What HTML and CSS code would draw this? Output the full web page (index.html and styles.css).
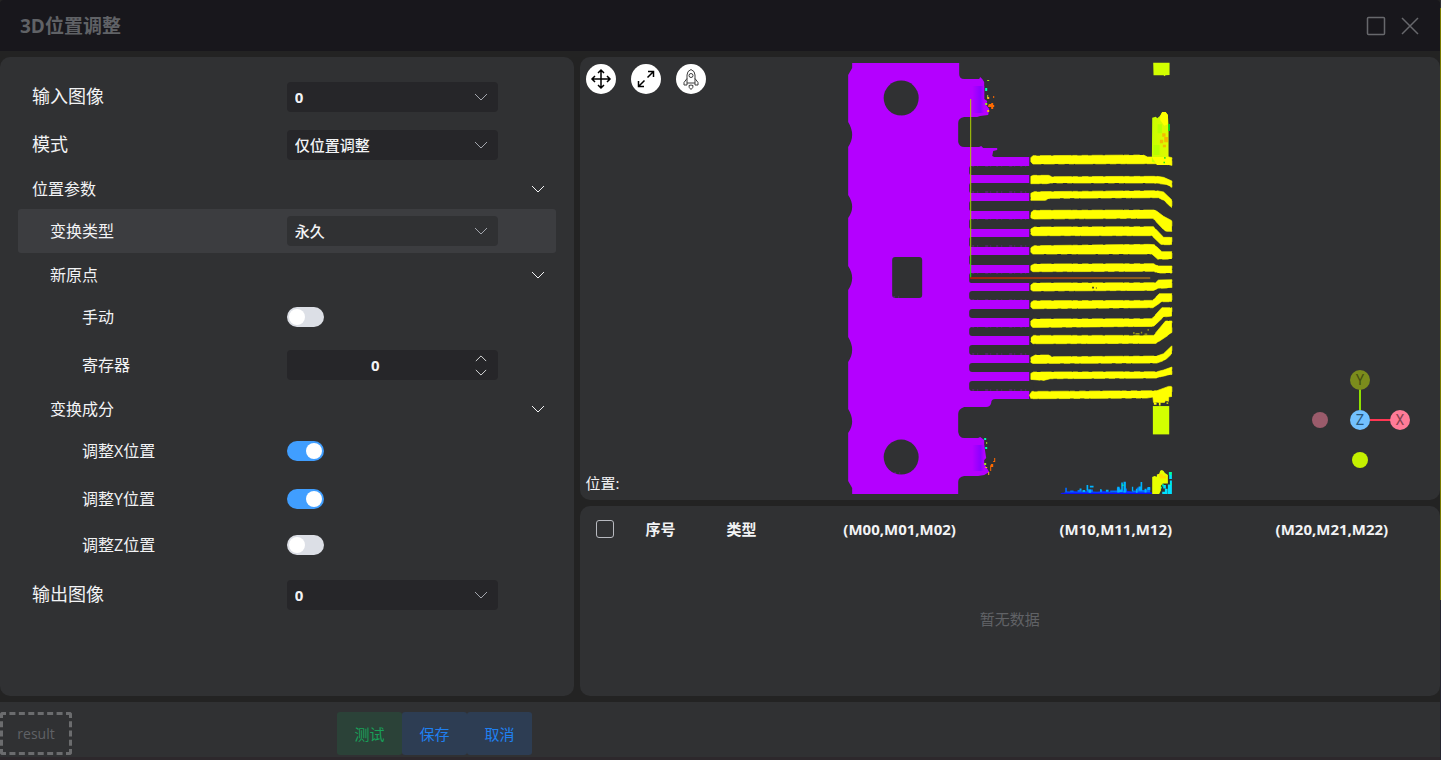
FILE: index.html
```html
<!DOCTYPE html>
<html lang="zh-CN">
<head>
<meta charset="utf-8">
<title>3D位置调整</title>
<link rel="stylesheet" href="styles.css">
</head>
<body>
<svg class="defs" aria-hidden="true">
  <symbol id="down" viewBox="0 0 14 8"><path d="M1 1l6 6 6-6" fill="none" stroke="currentColor"/></symbol>
  <symbol id="up" viewBox="0 0 14 8"><path d="M1 7l6-6 6 6" fill="none" stroke="currentColor"/></symbol>
</svg>
<div class="app">
  <header class="titlebar">
    <h1>3D位置调整</h1>
    <div class="window-actions">
      <button type="button" aria-label="最大化"><svg viewBox="0 0 20 20"><rect x="1.500" y="1.500" width="17" height="17" rx="1"/></svg></button>
      <button type="button" aria-label="关闭"><svg viewBox="0 0 20 20"><path d="M2 2l16 16M18 2L2 18"/></svg></button>
    </div>
  </header>

  <main class="workspace">
    <form class="panel settings">
      <div class="row">
        <label for="input-image" class="large">输入图像</label>
        <div class="field"><select id="input-image"><option>0</option></select><svg><use href="#down"/></svg></div>
      </div>
      <div class="row">
        <label for="mode" class="large">模式</label>
        <div class="field"><select id="mode"><option>仅位置调整</option></select><svg><use href="#down"/></svg></div>
      </div>
      <button type="button" class="section h40">位置参数<svg><use href="#down"/></svg></button>
      <div class="row h44 active">
        <label for="kind" class="level1">变换类型</label>
        <div class="field"><select id="kind"><option>永久</option></select><svg><use href="#down"/></svg></div>
      </div>
      <button type="button" class="section h44 level1">新原点<svg><use href="#down"/></svg></button>
      <div class="row h40">
        <label for="manual" class="level2">手动</label>
        <input type="checkbox" class="switch" id="manual">
      </div>
      <div class="row h56">
        <label for="register" class="level2">寄存器</label>
        <div class="field number">
          <input type="text" inputmode="numeric" id="register" value="0">
          <div class="steps">
            <button type="button" aria-label="增加"><svg><use href="#up"/></svg></button>
            <button type="button" aria-label="减少"><svg><use href="#down"/></svg></button>
          </div>
        </div>
      </div>
      <button type="button" class="section h32 level1">变换成分<svg><use href="#down"/></svg></button>
      <div class="row h52">
        <label for="adjust-x" class="level2">调整X位置</label>
        <input type="checkbox" class="switch" id="adjust-x" checked>
      </div>
      <div class="row h44">
        <label for="adjust-y" class="level2">调整Y位置</label>
        <input type="checkbox" class="switch" id="adjust-y" checked>
      </div>
      <div class="row">
        <label for="adjust-z" class="level2">调整Z位置</label>
        <input type="checkbox" class="switch" id="adjust-z">
      </div>
      <div class="row h52">
        <label for="output-image" class="large">输出图像</label>
        <div class="field"><select id="output-image"><option>0</option></select><svg><use href="#down"/></svg></div>
      </div>
    </form>

    <div class="results">
      <section class="panel viewer">
        <svg class="cloud" viewBox="580 57 860 443" role="img" aria-label="点云">
          <defs>
            <linearGradient id="tip" x1="0" x2="1"><stop offset="0" stop-color="#b400ff"/><stop offset=".7" stop-color="#8c00ff"/><stop offset="1" stop-color="#b400ff"/></linearGradient>
            <linearGradient id="ay" x1="0" y1="0" x2="0" y2="1"><stop offset="0" stop-color="#b4d200"/><stop offset=".85" stop-color="#96d200"/><stop offset="1" stop-color="#00f000"/></linearGradient>
            <linearGradient id="ax"><stop offset="0" stop-color="#a81c0c"/><stop offset="1" stop-color="#8a6420"/></linearGradient>
            <linearGradient id="blk"><stop offset="0" stop-color="#c8ff00"/><stop offset="1" stop-color="#e4f800"/></linearGradient>
          </defs>
          <path fill="#b400ff" d="M852 63H959V74Q959 79 964 79H979L980 77 982 79 984 82V99L987 101 986 105 989 109 988 115 980 116 977 117H964Q958 118 958 123V142Q959 147 964 147H979L981 146 983 148H997V150L993 151 992 156 994 157H1029V399H995Q991 399 991 403 990 407 986 407H964Q958 409 958 414V432Q959 438 964 438H978L980 437 984 440V445L986 458 983 461 986 467 989 472 984 475 978 476H964Q958 477 958 482V494H852V488L848 481V433Q856 422 848 409V362Q856 350 848 337V290Q856 278 848 266V218Q856 207 848 195V147Q856 135 848 122V75L852 68Z"/>
          <path fill="url(#tip)" d="M972 86H984V113H972zM972 445H984V471H972z"/>
          <g fill="#303133">
            <circle cx="901" cy="98" r="17.500"/><circle cx="901" cy="457" r="17.500"/>
            <rect x="892" y="257" width="30" height="41" rx="3"/>
            <rect x="969" y="166" width="64" height="9" rx="2"/>
            <rect x="969" y="183" width="64" height="10" rx="2"/>
            <rect x="969" y="201" width="64" height="10" rx="2"/>
            <rect x="969" y="219" width="64" height="10" rx="2"/>
            <rect x="969" y="237" width="64" height="10" rx="2"/>
            <rect x="969" y="255" width="64" height="10" rx="2"/>
            <rect x="969" y="273" width="64" height="10" rx="2"/>
            <rect x="969" y="291" width="64" height="9" rx="3"/>
            <rect x="969" y="309" width="64" height="9" rx="3"/>
            <rect x="969" y="327" width="64" height="9" rx="3"/>
            <rect x="969" y="345" width="64" height="10" rx="3"/>
            <rect x="969" y="363" width="64" height="9" rx="3"/>
            <rect x="969" y="381" width="64" height="10" rx="3"/>
          </g>
          <path fill="none" stroke="#b400ff" stroke-opacity=".5" stroke-dasharray="2 3 1 7 3 2 1 5" d="M893 297H903M895 116H903M894 473H902M972 166H1027M972 192H1027M972 219H1027M972 246H1027M972 273H1027M972 300H1027M972 327H1027M972 354H1027M972 390H1027"/>
          <g fill="#ff0" stroke="#ff0" stroke-width="2" stroke-dasharray="19 11 33 7 54 3 15 13">
            <g transform="translate(1010 55) scale(.3333)">
              <path d="M62 308L68 302 400 300 412 306 425 306 450 300 485 308V332L460 326 68 327 62 320Z"/>
              <path d="M62 364L70 361H115L125 365 440 364 460 367 485 378V397L465 388 430 384H120L110 386H62Z"/>
              <path d="M62 415L72 410 440 407 460 411 485 435V459L462 437 445 428 120 430 105 436H62Z"/>
              <path d="M62 473L70 466 435 465 460 484 485 497V529H465L428 490 68 492 62 488Z"/>
              <path d="M62 522L72 516 430 515 460 547H485V569H453L425 542H68L62 538Z"/>
              <path d="M62 578L72 572 415 568 433 569 455 590H485V612L443 613 425 597H68L62 592Z"/>
              <path d="M62 632L72 627 430 626 445 633H485V654H443L430 649 68 650 62 646Z"/>
            </g>
            <g transform="translate(1010 275) scale(.3333)">
              <path d="M62 30L70 24 435 23 445 15 485 14V38L443 40 430 46 68 48 62 44Z"/>
              <path d="M62 82L70 77 427 76 447 56H485V80H455L428 98 68 101 62 96Z"/>
              <path d="M62 138L70 132 425 131 455 98H485V123L460 126 430 154 68 157 62 152Z"/>
              <path d="M62 188L70 181H430L466 138H485V172L475 180 437 205 68 206 62 200Z"/>
              <path d="M62 247L75 240H115L125 245 440 243 460 236 485 212V236L465 255 440 264 68 265 62 262Z"/>
              <path d="M62 295L70 291 440 290 460 285 485 276V298L455 304 440 309 120 311 100 316 62 313Z"/>
              <path d="M58 360L65 349 440 347 475 334H485V364L475 366 476 380 466 376 463 382H430L428 366 410 369 61 371Z"/>
            </g>
          </g>
          <g transform="translate(1010 55) scale(.3333)">
            <path fill="#d2ff00" d="M429 23H478V60L466 61 463 64 460 61H430Z"/>
            <path fill="url(#blk)" d="M426 188L437 185 441 190 450 182 456 171H466L473 180 475 215V306L482 330H460L425 320Z"/>
            <path fill="#ffff00" d="M450 182L456 171H466L473 180V208L462 212 450 195ZM425 306H477L484 330H440Z"/>
            <path fill="#b8ff00" d="M442 208H455V235H442ZM430 270H448V300H430Z"/>
            <path fill="#ffa000" fill-opacity=".7" d="M456 235H466V245H456ZM462 246H473V262H462ZM449 254H459V265H449ZM458 269H467V277H458Z"/>
            <path fill="#00e020" d="M474 207H479V228H474ZM462 306H466V311H462ZM460 320H464V325H460Z"/>
          </g>
          <g transform="translate(1010 275) scale(.3333)">
            <path fill="#d2ff00" d="M428 393H477V478H428Z"/>
            <path fill="#ff0" d="M431 382h8v7h-8zM446 382h5v9h-5zM469 382h5v4h-5z"/>
            <path fill="#ff0" fill-opacity=".5" d="M369 171h4v6h-4zM376 174h12v4h-12zM392 170h4v5h-4zM412 162h4v5h-4zM403 175h8v4h-8z"/>
            <path fill="#303133" d="M246 35h5v5h-5zM257 37h3v3h-3z"/>
            <path fill="#1010ff" d="M150 657L155 653H165L168 649 178 651 190 648 210 651 235 648 260 651 280 648 310 652 340 645 370 651 400 647 426 652V657Z"/>
            <path fill="#006cff" d="M165 651V638H170V649H180V646H190V650H202V645H214V649H230V643H248V650H270V645H276V650H300V646H320V638H330V648H345V640H350V650H368V646H380V637H390V645H410V638H420V652H160Z"/>
            <path fill="#00b4ff" d="M208 640h6v6h-6zM217 645h8v6h-8zM229 630h5v16h-5zM239 632h11v5h-11zM235 643h8v10h-8zM270 642h4v8h-4zM287 644h8v6h-8zM321 635h7v17h-7zM333 622h5v27h-5zM340 620h7v32h-7zM327 643h9v8h-9zM365 635h4v14h-4zM377 641h5v12h-5zM391 621h5v26h-5zM385 634h6v13h-6zM403 641h6v11h-6zM412 636h8v9h-8z"/>
            <path fill="#00e0ff" d="M477 600h8v12h-8zM479 616h6v12h-6zM473 628h12v29h-12zM459 630h8v10h-8zM464 641h8v16h-8zM456 650h10v7h-10z"/>
            <path fill="#00ffa0" d="M476 591h9v9h-9zM480 625h4v5h-4zM456 626h4v8h-4zM451 635h4v5h-4zM336 628h4v5h-4z"/>
            <path fill="#e8ff00" d="M426 657V606L433 603 440 605V598L447 596 450 587 455 585 460 588 464 594 473 600V625H458L452 632V646L447 657Z"/>
            <path fill="#ffe000" d="M445 597H458V602H468V610H449Z"/>
          </g>
          <path fill="#00ffb0" d="M985 88h2v3h-2zM984 438h2v2h-2zM985 447h2v2h-2z"/>
          <path fill="#a0e020" d="M987 80h2v1h-2zM987 95h1v3h-1zM985 103h2v2h-2zM986 442h1v2h-1zM984 463h2v2h-2z"/>
          <path fill="#ffb020" d="M987 97h2v2h-2zM987 110h2v2h-2zM985 467h2v1h-2zM988 472h1v3h-1z"/>
          <path fill="#ff6a00" d="M989 104h2v-1h2v2h1v2h-1v2h-2v-2h-3v-2zM993 96h1v2h-1zM991 464h2v-3h1v-3h1v4h-2v5h-2v4h-1v-5z"/>
          <rect x="970" y="99" width="1" height="179" fill="url(#ay)"/>
          <rect x="970" y="277" width="180" height="2" fill="url(#ax)"/>
        </svg>

        <div class="tools">
          <button type="button" aria-label="平移"><svg viewBox="0 0 30 30"><path d="M15 6v18M6 15h18M12 9l3-3 3 3M12 21l3 3 3-3M9 12l-3 3 3 3M21 12l3 3-3 3" stroke-width="1.500"/></svg></button>
          <button type="button" aria-label="适应窗口"><svg viewBox="0 0 30 30"><path d="M16.500 13.500l6-6M17 7.500h5.500V13M13.500 16.500l-6 6M7.500 17v5.500H13" stroke-width="1.500"/></svg></button>
          <button type="button" aria-label="重置视角"><svg viewBox="0 0 30 30" class="rocket"><path d="M11 19V11q0-4 4-5.500 4 1.500 4 5.500v8zM11 14.500l-3 4V21h3v-2M19 14.500l3 4V21h-3v-2M13 21.500q-.5 2 2 4 2.500-2 2-4-2-1-4 0z"/><circle cx="15" cy="11.500" r="2"/></svg></button>
        </div>
        <output class="position">位置:</output>
        <svg class="gizmo" viewBox="0 0 100 100" role="img" aria-label="坐标轴">
          <path d="M50 18v22" stroke="#8fe000" stroke-width="2"/><path d="M60 50h22" stroke="#ff3653" stroke-width="2"/>
          <circle cx="50" cy="10" r="10" fill="#7b8c1c"/><circle cx="90" cy="50" r="10" fill="#ff7b97"/>
          <circle cx="50" cy="50" r="10" fill="#72c1ff"/><circle cx="10" cy="50" r="8" fill="#9a5b6b"/><circle cx="50" cy="90" r="8" fill="#c4f000"/>
          <text x="50" y="15" fill="#465011">Y</text><text x="90" y="55" fill="#87414f">X</text><text x="50" y="55" fill="#28577d">Z</text>
        </svg>
      </section>

      <section class="panel matrix">
        <table>
          <colgroup><col class="c-check"><col class="c-index"><col class="c-type"><col><col><col></colgroup>
          <thead><tr>
            <th><input type="checkbox" class="tick" aria-label="全选"></th>
            <th>序号</th><th>类型</th><th>(M00,M01,M02)</th><th>(M10,M11,M12)</th><th>(M20,M21,M22)</th>
          </tr></thead>
        </table>
        <p class="empty">暂无数据</p>
      </section>
    </div>
  </main>

  <footer class="actions">
    <button type="button" class="result">result</button>
    <div class="buttons">
      <button type="button" class="test">测试</button>
      <button type="button">保存</button>
      <button type="button">取消</button>
    </div>
  </footer>
</div>
<div class="edge"></div>
</body>
</html>
```
FILE: styles.css
```css
* { box-sizing: border-box; }

body {
  margin: 0;
  display: flex;
  height: 100vh;
  min-height: 700px;
  background: #232323;
  color: #f2f3f5;
  font: 15px/20px "Open Sans", "Noto Sans CJK SC", sans-serif;
}

button, input, select { font: inherit; color: inherit; }
button { padding: 0; border: 0; background: none; cursor: pointer; }
.defs { position: absolute; width: 0; height: 0; }

.app { flex: 1; min-width: 0; display: flex; flex-direction: column; }
.edge { width: 1px; background: linear-gradient(#303033 0 1%, #7a7a00 1% 79%, #24242e 79%); }

.titlebar {
  height: 51px;
  padding: 0 20px;
  display: flex;
  align-items: center;
  justify-content: space-between;
  background: #18171c;
  color: #606266;
  border-radius: 4px 4px 0 0;
}
.titlebar h1 { margin: 0; font-size: 19px; line-height: 24px; font-weight: 700; }
.window-actions { display: flex; gap: 14px; }
.window-actions button, .window-actions svg { display: block; width: 20px; height: 20px; }
.window-actions svg { fill: none; stroke: #67686c; stroke-width: 1.5; }

.workspace {
  flex: 1;
  min-height: 0;
  display: grid;
  grid-template-columns: 2fr 3fr;
  gap: 6px;
  padding: 6px 0;
}
.panel { background: #303133; border-radius: 10px; }

.settings { padding: 16px 18px; }
.row {
  height: 48px;
  display: grid;
  grid-template-columns: 1fr 1fr;
  align-items: center;
  border-radius: 3px;
}
.row label, .section { padding-left: 14px; font-size: 16px; line-height: 24px; }
.row label.large { font-size: 18px; padding-bottom: 2px; }
.row .level1, .section.level1 { padding-left: 32px; }
.row .level2 { padding-left: 64px; }
.section {
  width: 100%;
  display: flex;
  align-items: center;
  justify-content: space-between;
  padding-right: 11px;
}
.section svg { width: 14px; height: 8px; }
.h32 { height: 32px; }
.h40 { height: 40px; }
.h44 { height: 44px; }
.h52 { height: 52px; }
.h56 { height: 56px; }
.active { background: #3c3d40; }

.field {
  width: 211px;
  height: 30px;
  display: grid;
  align-items: center;
  background: #262629;
  border-radius: 4px;
}
.active .field { background: #303133; }
.field > * { grid-area: 1 / 1; }
.field select, .field input {
  width: 100%;
  height: 30px;
  padding: 0 36px 0 8px;
  border: 0;
  background: none;
  appearance: none;
  font-weight: 700;
}
.field option { background: #262629; }
#mode, #kind { font-weight: 500; }
.field > svg {
  justify-self: end;
  width: 14px;
  height: 8px;
  margin-right: 10px;
  color: #a3a6ad;
  pointer-events: none;
}
.field.number input { text-align: center; padding: 0 34px 0 0; }
.steps { justify-self: end; display: grid; margin-right: 10px; }
.steps button { width: 14px; height: 14px; display: grid; place-items: center; }
.steps svg { width: 12px; height: 7px; }

.switch {
  appearance: none;
  width: 37px;
  height: 20px;
  margin: 0;
  padding: 2px;
  display: flex;
  border-radius: 10px;
  background: #dcdfe6;
}
.switch::before { content: ""; width: 16px; height: 16px; border-radius: 50%; background: #fff; }
.switch:checked { background: #409eff; justify-content: flex-end; }

.results {
  display: grid;
  grid-template-rows: 7fr 3fr;
  gap: 6px;
  min-height: 0;
}
.viewer {
  position: relative;
  display: flex;
  flex-direction: column;
  align-items: flex-start;
  justify-content: space-between;
  padding: 7px 6px;
  min-height: 0;
}
.cloud { position: absolute; inset: 0; width: 100%; height: 100%; }
.tools { position: relative; display: flex; gap: 15px; }
.tools button { width: 30px; height: 30px; border-radius: 50%; background: #fff; }
.tools svg { display: block; fill: none; stroke: #000; }
.tools .rocket { stroke: #3c3c3c; stroke-width: 1; }
.position { position: relative; }
.gizmo { position: absolute; right: 30px; bottom: 30px; width: 100px; height: 100px; }
.gizmo text { font: 14px Roboto, sans-serif; text-anchor: middle; }

.matrix { display: flex; flex-direction: column; }
.matrix table { width: 100%; table-layout: fixed; border-collapse: collapse; }
.matrix th { height: 46px; padding: 0; font-weight: 700; }
.c-check { width: 50px; }
.c-index { width: 62px; }
.c-type { width: 100px; }
.tick {
  appearance: none;
  display: block;
  width: 18px;
  height: 18px;
  margin: 0 auto;
  border: 1px solid #b8bac0;
  border-radius: 3px;
}
.empty { flex: 1; margin: 0; padding-bottom: 10px; display: grid; place-items: center; color: #606266; }

.actions {
  height: 58px;
  padding-top: 8px;
  display: flex;
  align-items: center;
  gap: 265px;
  background: #303133;
  border-bottom: 3px solid #2d282c;
}
.actions button { height: 43px; border-radius: 3px; }
.actions .result { width: 72px; border: 3px dashed #6b6c6e; color: #606266; font-size: 14px; }
.buttons { display: flex; }
.buttons button { width: 65px; background: #2d3d53; color: #2080f0; }
.buttons .test { background: #2b4238; color: #18a058; }
```
